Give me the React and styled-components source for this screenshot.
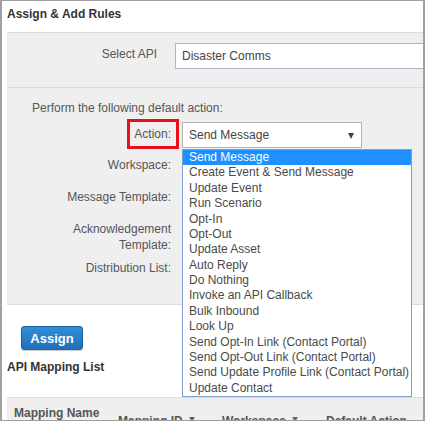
import React from 'react'
import styled, { createGlobalStyle } from 'styled-components'

const actions = [
  'Send Message',
  'Create Event & Send Message',
  'Update Event',
  'Run Scenario',
  'Opt-In',
  'Opt-Out',
  'Update Asset',
  'Auto Reply',
  'Do Nothing',
  'Invoke an API Callback',
  'Bulk Inbound',
  'Look Up',
  'Send Opt-In Link (Contact Portal)',
  'Send Opt-Out Link (Contact Portal)',
  'Send Update Profile Link (Contact Portal)',
  'Update Contact',
]

const fields = [
  { label: 'Workspace:' },
  { label: 'Message Template:' },
  { label: 'Acknowledgement Template:', wrap: true },
  { label: 'Distribution List:' },
]

const columns = [
  { title: 'Mapping Name', sort: true },
  { title: 'Mapping ID', sort: true },
  { title: 'Workspace', sort: true },
  { title: 'Default Action' },
]

const App = () => {
  return (
    <>
      <GlobalStyle />
      <Frame>
        <Title>Assign &amp; Add Rules</Title>
        <Panel>
          <ApiRow>
            <ApiLabel>Select API</ApiLabel>
            <TextBox>Disaster Comms</TextBox>
          </ApiRow>
          <ActionSection>
            <Intro>Perform the following default action:</Intro>
            <FieldRow $minHeight={31}>
              <LabelCell>
                <LabelText $highlight>Action:</LabelText>
              </LabelCell>
              <SelectWrap>
                <SelectBox>
                  Send Message
                  <Caret />
                </SelectBox>
                <DropList>
                  {actions.map((item, i) => (
                    <DropItem key={item} $active={i === 0}>
                      {item}
                    </DropItem>
                  ))}
                </DropList>
              </SelectWrap>
            </FieldRow>
            {fields.map((field) => (
              <FieldRow key={field.label} $minHeight={32}>
                <LabelCell>
                  <LabelText $wrap={field.wrap}>{field.label}</LabelText>
                </LabelCell>
                <SelectBox />
              </FieldRow>
            ))}
          </ActionSection>
        </Panel>
        <AssignButton>Assign</AssignButton>
        <SubTitle>API Mapping List</SubTitle>
        <TableHead>
          {columns.map((col) => (
            <HeadCell key={col.title}>
              {col.title}
              {col.sort && <SortArrow />}
            </HeadCell>
          ))}
        </TableHead>
      </Frame>
    </>
  )
}

export default App

const GlobalStyle = createGlobalStyle`
  body {
    margin: 0;
    background: #fff;
    font-family: "Liberation Sans", Arial, sans-serif;
  }
`
const Frame = styled.div`
  width: 425px;
  height: 421px;
  box-sizing: border-box;
  border: 1px solid #a0a0a0;
  border-left-width: 2px;
  border-right-width: 2px;
  overflow: hidden;
  background: #fff;
  font-family: "Liberation Sans", Arial, sans-serif;
  font-size: 12px;
  line-height: 16px;
  color: #555;
`
const Title = styled.div`
  padding: 5px 0 0 5px;
  font-weight: 700;
  color: #333;
`
const Panel = styled.div`
  position: relative;
  z-index: 1;
  margin: 10px 0 0 5px;
  background: #efefef;
  border-top: 1px solid #dcdcdc;
  border-bottom: 1px solid #dcdcdc;
`
const ApiRow = styled.div`
  display: flex;
  align-items: flex-start;
  gap: 18px;
  padding: 10px 0 18px;
  overflow: hidden;
`
const ApiLabel = styled.div`
  width: 150px;
  flex-shrink: 0;
  padding-top: 3px;
  text-align: right;
`
const TextBox = styled.div`
  width: 280px;
  flex-shrink: 0;
  height: 26px;
  box-sizing: border-box;
  padding: 0 6px;
  line-height: 24px;
  background: #fff;
  border: 1px solid #a9b7c6;
  color: #444;
`
const ActionSection = styled.div`
  border-top: 1px solid #d4dde6;
  padding: 12px 0 16px;
`
const Intro = styled.div`
  padding-left: 25px;
  margin-bottom: 6px;
`
const FieldRow = styled.div`
  display: flex;
  align-items: flex-start;
  gap: 3px;
  min-height: ${(p) => p.$minHeight}px;
`
const LabelCell = styled.div`
  width: 172px;
  flex-shrink: 0;
  display: flex;
  justify-content: flex-end;
`
const LabelText = styled.span`
  display: block;
  box-sizing: border-box;
  text-align: right;
  border: 3px solid ${(p) => (p.$highlight ? '#e8111b' : 'transparent')};
  padding: ${(p) => (p.$highlight ? '4px 5px 4px 4px' : '1px 5px 0 4px')};
  margin-top: ${(p) => (p.$highlight ? '-3px' : '0')};
  max-width: ${(p) => (p.$wrap ? '120px' : 'none')};
`
const SelectWrap = styled.div`
  position: relative;
`
const SelectBox = styled.div`
  position: relative;
  width: 180px;
  height: 26px;
  box-sizing: border-box;
  padding: 0 6px;
  line-height: 24px;
  background: #fff;
  border: 1px solid #b5b5b5;
  color: #444;
`
const Caret = styled.span`
  position: absolute;
  right: 7px;
  top: 10px;
  width: 0;
  height: 0;
  border-left: 3.5px solid transparent;
  border-right: 3.5px solid transparent;
  border-top: 6px solid #444;
`
const DropList = styled.ul`
  position: absolute;
  top: 27px;
  left: 0;
  z-index: 5;
  width: 230px;
  margin: 0;
  padding: 0;
  list-style: none;
  box-sizing: border-box;
  background: #fff;
  border: 1px solid #7f9fd6;
`
const DropItem = styled.li`
  padding-left: 6px;
  line-height: 15.375px;
  white-space: nowrap;
  color: ${(p) => (p.$active ? '#fff' : '#4a4a4a')};
  background: ${(p) => (p.$active ? '#1e90ff' : 'transparent')};
`
const AssignButton = styled.button`
  display: block;
  margin: 21px 0 0 19px;
  width: 62px;
  height: 24px;
  padding: 0;
  border: 1px solid #1d62a0;
  border-radius: 3px;
  background: linear-gradient(#2f8fd8, #1f70b8);
  box-shadow: 0 1px 1px rgba(0, 0, 0, 0.2);
  color: #fff;
  font-family: "Liberation Sans", Arial, sans-serif;
  font-size: 13px;
  font-weight: 700;
`
const SubTitle = styled.div`
  margin: 9px 0 0 5px;
  font-weight: 700;
  color: #333;
`
const TableHead = styled.div`
  display: grid;
  grid-template-columns: 104px 104px 104px 1fr;
  align-items: center;
  margin: 22px 0 0 5px;
  padding: 7px 0;
  background: #efefef;
  border-top: 1px solid #dcdcdc;
`
const HeadCell = styled.div`
  padding: 0 10px 0 7px;
  font-weight: 700;
  color: #555;
  white-space: normal;
`
const SortArrow = styled.span`
  display: inline-block;
  margin-left: 6px;
  vertical-align: 3px;
  width: 0;
  height: 0;
  border-left: 3.5px solid transparent;
  border-right: 3.5px solid transparent;
  border-top: 5px solid #666;
`
